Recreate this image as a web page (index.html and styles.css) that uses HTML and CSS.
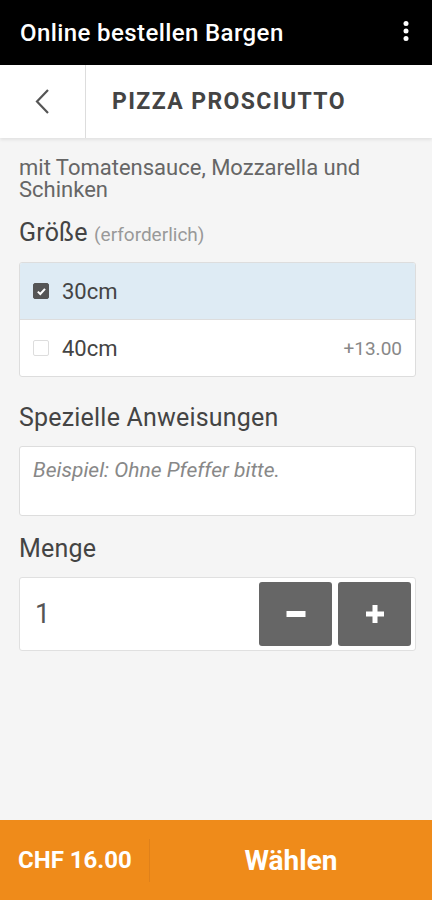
FILE: index.html
```html
<!DOCTYPE html>
<html lang="de">
<head>
    <meta charset="UTF-8">
    <meta name="viewport" content="width=device-width, initial-scale=1.0">
    <title>Pizza Prosciutto</title>
    <link rel="stylesheet" href="styles.css">
</head>
<body>
<div class="app">

    <!-- Top bar -->
    <div class="topbar">
        <span class="topbar-title">Online bestellen Bargen</span>
        <svg class="kebab" width="6" height="22" viewBox="0 0 6 22">
            <circle cx="3" cy="3.5" r="2.5" fill="#fff"/>
            <circle cx="3" cy="11" r="2.5" fill="#fff"/>
            <circle cx="3" cy="18.5" r="2.5" fill="#fff"/>
        </svg>
    </div>

    <!-- Header -->
    <div class="header">
        <div class="back">
            <svg width="17" height="27" viewBox="0 0 17 27">
                <polyline points="14,2 3,13.5 14,25" fill="none" stroke="#555" stroke-width="2.2"/>
            </svg>
        </div>
        <h1 class="item-title">PIZZA PROSCIUTTO</h1>
    </div>

    <!-- Main -->
    <div class="content">
        <p class="desc">mit Tomatensauce, Mozzarella und Schinken</p>

        <h2 class="label size-label">Größe <span class="hint">(erforderlich)</span></h2>
        <div class="options">
            <div class="option selected">
                <span class="check on">
                    <svg width="11" height="11" viewBox="0 0 11 11">
                        <polyline points="1.8,5.6 4.3,8 9,2.8" fill="none" stroke="#fff" stroke-width="2"/>
                    </svg>
                </span>
                <span class="option-name">30cm</span>
            </div>
            <div class="option">
                <span class="check"></span>
                <span class="option-name">40cm</span>
                <span class="option-price">+13.00</span>
            </div>
        </div>

        <h2 class="label">Spezielle Anweisungen</h2>
        <div class="notes">Beispiel: Ohne Pfeffer bitte.</div>

        <h2 class="label qty-label">Menge</h2>
        <div class="qty">
            <span class="qty-value">1</span>
            <button class="qty-btn">
                <svg width="20" height="20" viewBox="0 0 20 20"><rect x="0.5" y="7" width="19" height="6" fill="#fff"/></svg>
            </button>
            <button class="qty-btn">
                <svg width="20" height="20" viewBox="0 0 20 20"><rect x="1" y="7.5" width="18" height="5" fill="#fff"/><rect x="7.5" y="1" width="5" height="18" fill="#fff"/></svg>
            </button>
        </div>
    </div>

    <!-- Footer -->
    <div class="footer">
        <div class="total">CHF 16.00</div>
        <div class="choose">Wählen</div>
    </div>

</div>
</body>
</html>
```
FILE: styles.css
```css
body {
    font-family: Roboto, "Noto Sans", Arial, sans-serif;
    margin: 0;
    padding: 0;
    background-color: #f5f5f5;
    color: #444;
}

.app {
    display: flex;
    flex-direction: column;
    min-height: 100vh;
}

/* Top bar */
.topbar {
    height: 65px;
    background: #000;
    color: white;
    display: flex;
    align-items: center;
    justify-content: space-between;
    padding: 0 23px 0 20px;
}
.topbar-title {
    font-size: 24px;
    font-weight: 500;
    letter-spacing: 0.4px;
}
.kebab { margin-top: -3px; }

/* Header */
.header {
    height: 73px;
    background: white;
    display: flex;
    align-items: stretch;
    box-shadow: 0 2px 3px rgba(0, 0, 0, 0.08);
}
.back {
    width: 85px;
    border-right: 1px solid #ddd;
    display: flex;
    align-items: center;
    justify-content: center;
}
.item-title {
    margin: 0;
    padding-left: 26px;
    font-size: 23px;
    font-weight: bold;
    letter-spacing: 1.4px;
    color: #444;
    display: flex;
    align-items: center;
}

/* Content */
.content {
    flex: 1;
    padding: 19px 16px 0 19px;
}
.desc {
    margin: 0;
    font-size: 22px;
    line-height: 22px;
    color: #666;
}
.label {
    margin: 17px 0 13px;
    font-size: 25px;
    font-weight: normal;
    color: #444;
    line-height: 30px;
    letter-spacing: 0.2px;
}
.size-label { margin-bottom: 12px; }
.qty-label { margin-top: 18px; }
.hint { font-size: 19px; color: #999; letter-spacing: 0; }

.options {
    background: white;
    border: 1px solid #ddd;
    border-radius: 3px;
    overflow: hidden;
}
.option {
    height: 56px;
    display: flex;
    align-items: center;
    padding: 0 13px;
    font-size: 22px;
}
.option + .option { border-top: 1px solid #ddd; }
.option.selected { background: #deebf4; }
.check {
    width: 14px;
    height: 14px;
    border: 1px solid #ddd;
    border-radius: 2px;
    background: white;
    display: flex;
    align-items: center;
    justify-content: center;
    margin-right: 13px;
}
.check.on { background: #555; border-color: #555; }
.option-name { flex: 1; color: #444; }
.option-price { font-size: 19px; color: #888; }

.options + .label { margin-top: 26px; }

.notes {
    height: 57px;
    background: white;
    border: 1px solid #ddd;
    border-radius: 3px;
    padding: 11px 13px 0;
    font-size: 21px;
    font-style: italic;
    color: #888;
    line-height: 24px;
}

.qty {
    height: 64px;
    background: white;
    border: 1px solid #e0e0e0;
    border-radius: 3px;
    padding: 4px 4px 4px 15px;
    display: flex;
    align-items: stretch;
    gap: 6px;
}
.qty-value {
    flex: 1;
    display: flex;
    align-items: center;
    font-size: 27px;
    color: #555;
}
.qty-btn {
    width: 73px;
    background: #666;
    border: none;
    border-radius: 3px;
    padding: 0;
    display: flex;
    align-items: center;
    justify-content: center;
}

/* Footer */
.footer {
    height: 80px;
    background: #ef8b1a;
    color: white;
    display: flex;
    align-items: center;
}
.total {
    box-sizing: border-box;
    width: 150px;
    padding-left: 18px;
    font-size: 24px;
    font-weight: bold;
    border-right: 1px solid #e0811a;
    height: 43px;
    line-height: 43px;
}
.choose {
    flex: 1;
    text-align: center;
    font-size: 28px;
    font-weight: bold;
}
```
